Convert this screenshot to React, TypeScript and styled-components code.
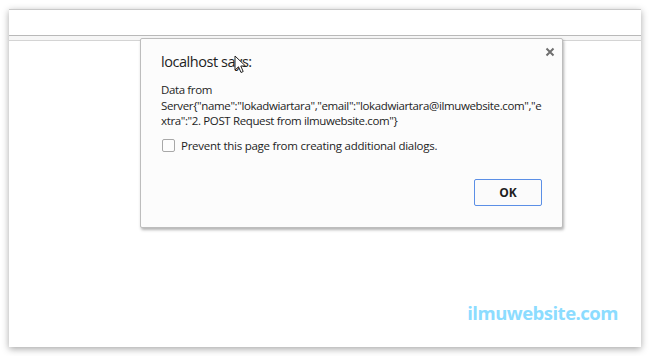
import styled, { createGlobalStyle } from 'styled-components'

const GlobalStyle = createGlobalStyle`
  body {
    margin: 0;
    background: #ffffff;
    font-family: "Open Sans", "Noto Sans", sans-serif;
  }
`

const Page = styled.div`
  padding: 9px;
`

const Window = styled.div`
  position: relative;
  width: 632px;
  height: 338px;
  box-sizing: border-box;
  background: #fff;
  border-top: 1px solid #c9c9c9;
  box-shadow: 0 2px 7px rgba(0, 0, 0, 0.35);
`

const Toolbar = styled.div`
  height: 25px;
  border-bottom: 1px solid #b9b9b9;
`

const Strip = styled.div`
  height: 4px;
  background: #f6f6f6;
  border-bottom: 1px solid #d4d4d4;
`

// modal sits over the page content
const Dialog = styled.div`
  position: absolute;
  left: 131px;
  top: 28px;
  width: 423px;
  height: 190px;
  box-sizing: border-box;
  padding: 7px 7px 0 20px;
  background: #fcfcfc;
  border: 1px solid #bdbdbd;
  border-radius: 2px;
  box-shadow: 1px 2px 3px rgba(0, 0, 0, 0.3);
  color: #1e1e1e;
`

const Header = styled.div`
  display: flex;
  justify-content: space-between;
  align-items: flex-start;
`

const Title = styled.div`
  margin-top: 6px;
  font-size: 14.5px;
  line-height: 20px;
  letter-spacing: -0.45px;
`

const Close = styled.div`
  display: flex;
  width: 10px;
  height: 10px;
  margin-top: 1px;
`

const Body = styled.div`
  padding-right: 13px;
`

const Message = styled.div`
  margin-top: 10px;
  font-size: 11.5px;
  line-height: 15.5px;
  letter-spacing: -0.37px;
`

const Line = styled.div`
  white-space: nowrap;
`

const CheckRow = styled.label`
  margin-top: 9px;
  display: flex;
  align-items: center;
  gap: 6px;
  font-size: 11.5px;
  line-height: 16px;
  letter-spacing: -0.25px;
`

const Box = styled.span`
  width: 11px;
  height: 11px;
  margin-left: 1px;
  border: 1px solid #a8a8a8;
  border-radius: 2px;
  background: #fdfdfd;
`

const Footer = styled.div`
  margin-top: 25px;
  display: flex;
  justify-content: flex-end;
`

const OkButton = styled.button`
  width: 68px;
  height: 27px;
  box-sizing: border-box;
  border: 1px solid #5b8fe6;
  border-radius: 2px;
  background: #fbfbfb;
  font-family: "Open Sans", sans-serif;
  font-size: 12px;
  font-weight: 700;
  color: #1e1e1e;
  padding: 0;
`

const Cursor = styled.svg`
  position: absolute;
  left: 93px;
  top: 16px;
`

const Watermark = styled.div`
  position: absolute;
  right: 23px;
  bottom: 22px;
  font-family: "Open Sans", sans-serif;
  font-weight: 700;
  font-size: 18.5px;
  color: #8cdcff;
  letter-spacing: -0.5px;
`

const App = () => {
  return (
    <Page>
      <GlobalStyle />
      <Window>
        <Toolbar />
        <Strip />
        <Dialog>
          <Header>
            <Title>localhost says:</Title>
            <Close>
              <svg width="10" height="10" viewBox="0 0 10 10">
                <path d="M1.5 1.5 L8.5 8.5 M8.5 1.5 L1.5 8.5" stroke="#6f6f6f" strokeWidth="2" />
              </svg>
            </Close>
          </Header>
          <Body>
            <Message>
              <Line>Data from</Line>
              <Line>Server{'{'}"name":"lokadwiartara","email":"lokadwiartara@ilmuwebsite.com","e</Line>
              <Line>xtra":"2. POST Request from ilmuwebsite.com"{'}'}</Line>
            </Message>
            <CheckRow>
              <Box />
              Prevent this page from creating additional dialogs.
            </CheckRow>
            <Footer>
              <OkButton>OK</OkButton>
            </Footer>
          </Body>
          <Cursor width="13" height="19" viewBox="0 0 13 19">
            <path d="M1 1 L1 15 L4.5 11.8 L7 17.5 L9.2 16.5 L6.8 11 L11.5 11 Z" fill="#fff" stroke="#222" strokeWidth="1" strokeLinejoin="round" />
          </Cursor>
        </Dialog>
        <Watermark>ilmuwebsite.com</Watermark>
      </Window>
    </Page>
  )
}

export default App
